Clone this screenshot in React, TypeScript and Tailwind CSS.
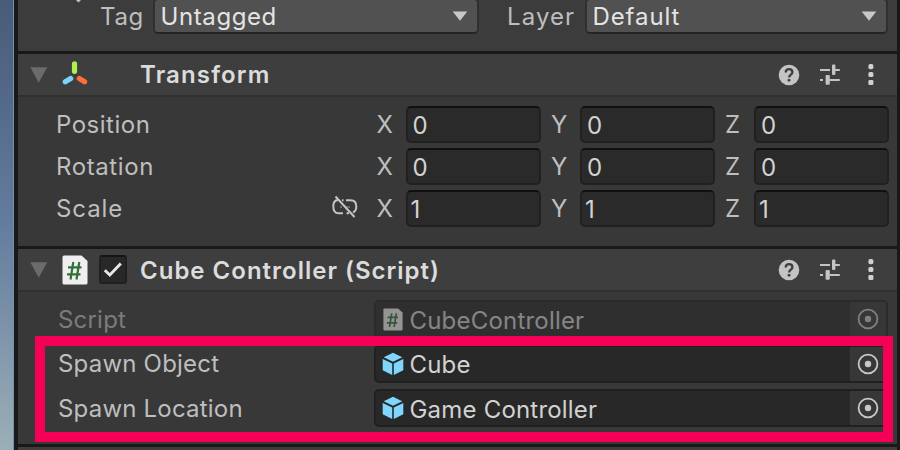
import type { ReactNode } from "react";

function HelpIcon() {
  return (
    <svg width="22" height="22" viewBox="0 0 22 22">
      <circle cx="11" cy="11" r="10.3" fill="#c4c4c4" />
      <path d="M7.7 8.6C7.7 6.3 9 5.2 11 5.2s3.4 1.2 3.4 3c0 2.3-3.3 2.5-3.3 5.2" fill="none" stroke="#3e3e3e" strokeWidth="2.3" />
      <rect x="9.6" y="14.9" width="2.9" height="2.6" rx=".8" fill="#3e3e3e" />
    </svg>
  );
}

function PresetIcon() {
  return (
    <svg width="22" height="22" viewBox="0 0 22 22" fill="#c4c4c4">
      <rect x="1" y="5" width="10" height="2" />
      <rect x="13" y="0.5" width="3.4" height="10.5" rx="1" />
      <rect x="16" y="5" width="4.8" height="2" />
      <rect x="1" y="15" width="3" height="2" />
      <rect x="6.6" y="11" width="4.2" height="9.8" rx="1" />
      <rect x="10.5" y="15" width="10.3" height="2" />
    </svg>
  );
}

function MenuIcon() {
  return (
    <svg width="6" height="22" viewBox="0 0 6 22" fill="#d0d0d0">
      <rect x=".4" y="0" width="5" height="5.2" rx="1.8" />
      <rect x=".4" y="8" width="5" height="5" rx="1.6" />
      <rect x=".4" y="16" width="5" height="5" rx="1.3" />
    </svg>
  );
}

function AxisIcon() {
  return (
    <svg className="-ml-px -mt-px" width="28" height="28" viewBox="0 0 28 28" strokeWidth="5.2" strokeLinecap="round">
      <path d="M13.5 3.8v7.5" stroke="#a9f250" />
      <path d="M9.7 18.6L4.3 21.8" stroke="#7bd2fb" />
      <path d="M18.3 18.6l5.3 3.2" stroke="#ff6d3f" />
    </svg>
  );
}

function ScriptIcon({ className }: { className: string }) {
  return (
    <svg className={className} viewBox="0 0 26 30">
      <path d="M2 .5h17.5L25.5 6v22q0 1.5-1.5 1.5H2Q.5 29.5.5 28V2Q.5.5 2 .5Z" fill="#efefef" />
      <path d="M11.3 7L8.5 24.5M17.3 7L14.5 24.5M6 12.3H19.5M5 19.3H18.5" fill="none" stroke="#347038" strokeWidth="2.2" />
    </svg>
  );
}

function CubeIcon() {
  return (
    <svg className="-ml-px" width="22" height="24" viewBox="0 0 22 24" fill="#80d6fd">
      <path d="M11 .8L20.3 5.2L11 9.7L1.7 5.2Z" />
      <path d="M.7 7L10.2 11.5V23L.7 18.3Z" />
      <path d="M21.3 7L11.8 11.5V23L21.3 18.3Z" />
    </svg>
  );
}

function UnlinkIcon() {
  return (
    <svg className="-mt-[4px] ml-px" width="26" height="24" viewBox="0 0 26 24" fill="none" stroke="#c4c4c4" strokeWidth="2">
      <path d="M6 5C2.5 5.3 1.3 7.8 1.3 11c0 4.800 1.700 7.300 5.200 7.300H11" />
      <path d="M10 5.200h1.500M14 5.200h4.500c4 0 5.800 2 5.800 6.300 0 3.300-1 5-3.300 6M14.500 18.300h2.500" />
      <path d="M8 12h2M13 12h5" strokeWidth="1.3" stroke="#777777" />
      <path d="M3.5 1.5L22.5 22" />
    </svg>
  );
}

function Foldout() {
  return (
    <svg width="18" height="16" viewBox="0 0 18 16">
      <path d="M.3.3H17.2L8.75 15.7Z" fill="#6b6b6b" />
    </svg>
  );
}

function Header({ icon, title }: { icon: ReactNode; title: ReactNode }) {
  return (
    <div className="flex h-[46px] shrink-0 items-center border-t-[3px] border-b-2 border-t-[#191919] border-b-[#303030] bg-[#3e3e3e] pl-3">
      <Foldout />
      <div className="ml-[14px] flex w-[78px] items-center">{icon}</div>
      <div className="flex-1 font-semibold text-[#dcdcdc]">{title}</div>
      <div className="mr-[23px] flex items-center">
        <HelpIcon />
        <div className="ml-[19px]"><PresetIcon /></div>
        <div className="ml-[27px]"><MenuIcon /></div>
      </div>
    </div>
  );
}

function NumberField({ axis, value, className }: { axis: string; value: string; className: string }) {
  return (
    <div className={`flex items-center ${className}`}>
      <span className="w-[29px]">{axis}</span>
      <div className={`mb-px flex h-[37px] w-[135px] items-center rounded-[5px] border-2 border-[#202020] border-t-[#101010] bg-[#2a2a2a] pt-[2px] text-[#d2d2d2] ${value === "1" ? "pl-[3px]" : "pl-[5px]"}`}>{value}</div>
    </div>
  );
}

function VectorRow({ label, value, linked }: { label: ReactNode; value: string; linked?: boolean }) {
  return (
    <div className="flex h-[42px] items-center pl-[38px]">
      <div className="w-[275px]">{label}</div>
      <div className="w-[45.5px]">{linked && <UnlinkIcon />}</div>
      <NumberField axis="X" value={value} className="w-[174.5px]" />
      <NumberField axis="Y" value={value} className="w-[174px]" />
      <NumberField axis="Z" value={value} className="w-[164px]" />
    </div>
  );
}

function ObjectRow({ label, icon, value, disabled }: { label: ReactNode; icon: ReactNode; value: ReactNode; disabled?: boolean }) {
  return (
    <div className={`flex h-[38px] shrink-0 items-center pl-[40px] tracking-[0.2px] ${disabled ? "opacity-50" : ""}`}>
      <div className="w-[316px] pt-px">{label}</div>
      <div className="flex h-[38px] w-[514px] items-center rounded-[5px] border-2 border-[#202020] bg-[#282828] pl-[7px] text-[#d2d2d2]">
        <div className="flex w-[26.5px]">{icon}</div>
        <div className="flex-1 pt-[3px]">{value}</div>
        <div className="flex h-full w-[36px] items-center bg-[#373737] pl-[7px]">
          <svg width="22" height="22" viewBox="0 0 22 22">
            <circle cx="11" cy="11" r="9.4" fill="none" stroke="#c8c8c8" strokeWidth="1.8" />
            <circle cx="11" cy="11" r="3.2" fill="#c8c8c8" />
          </svg>
        </div>
      </div>
    </div>
  );
}

function Dropdown({ children, className }: { children: ReactNode; className: string }) {
  return (
    <div className={`flex h-[36px] items-center justify-between rounded-[5px] border-2 border-[#303030] border-b-[#242424] bg-[#515151] pr-[9px] pl-[5.5px] text-[#e4e4e4] ${className}`}>
      {children}
      <svg width="16" height="10" viewBox="0 0 16 10"><path d="M.7.5H15.3L8 9.7Z" fill="#c8c8c8" /></svg>
    </div>
  );
}

export default function App() {
  return (
    <div className="relative flex h-[450px] w-[900px] overflow-hidden bg-[#191919] font-[Inter,sans-serif] text-[24px] leading-[30px] whitespace-nowrap text-[#bebebe]">
      <div className="w-[14px] border-r border-[#7392b2] bg-linear-to-b from-[#485b79] via-[#647c9e] to-[#9cafb7]" />
      <div className="ml-[4px] flex w-[879px] flex-col bg-[#383838]">
        <div className="flex h-[51px] shrink-0 items-start bg-[#3c3c3c]">
          <svg className="ml-[58px] h-[3px] w-[6px]" viewBox="0 0 6 3"><path d="M0 0H5L2.5 2.5Z" fill="#c4c4c4" /></svg>
          <div className="ml-[18px] w-[53px] pt-[2px] tracking-[0.7px]">Tag</div>
          <Dropdown className="-mt-[2px] w-[326px]"><span className="pt-[2px] tracking-[0.6px]">Untagged</span></Dropdown>
          <div className="ml-[28px] w-[78px] pt-[2px] tracking-[1.1px]">Layer</div>
          <Dropdown className="-mt-[2px] w-[303px]"><span className="pt-[2px] tracking-[0.9px]">Default</span></Dropdown>
        </div>
        <Header icon={<AxisIcon />} title={<div className="pt-px tracking-[1.15px]">Transform</div>} />
        <div className="h-[149px] shrink-0 pt-[7px]">
          <VectorRow label={<span className="tracking-[0.5px]">Position</span>} value="0" />
          <VectorRow label={<span className="tracking-[0.6px]">Rotation</span>} value="0" />
          <VectorRow label={<span className="tracking-[0.9px]">Scale</span>} value="1" linked />
        </div>
        <Header
          icon={
            <>
              <ScriptIcon className="h-[30px] w-[26px]" />
              <div className="ml-[11px] flex h-[29px] w-[28px] items-center justify-center rounded-[3px] border-2 border-[#202020] border-t-[#151515] bg-[#282828]">
                <svg width="20" height="18" viewBox="0 0 20 18"><path d="M1.8 9.3L6.8 14L17.8 2.5" fill="none" stroke="#e8e8e8" strokeWidth="2.9" /></svg>
              </div>
            </>
          }
          title={<div className="pt-[3px] tracking-[1px]">Cube Controller (Script)</div>}
        />
        <div className="flex h-[152px] shrink-0 flex-col gap-[6.5px] pt-2">
          <ObjectRow disabled label="Script" icon={<ScriptIcon className="h-[23px] w-[20px]" />} value="CubeController" />
          <ObjectRow label="Spawn Object" icon={<CubeIcon />} value="Cube" />
          <ObjectRow label="Spawn Location" icon={<CubeIcon />} value="Game Controller" />
        </div>
        <div className="h-[6px] shrink-0 border-t-[3px] border-[#191919] bg-[#3e3e3e]" />
      </div>
      <div className="absolute top-[336px] left-[35px] h-[106px] w-[858px] border-[10px] border-[#f50057]" />
    </div>
  );
}
